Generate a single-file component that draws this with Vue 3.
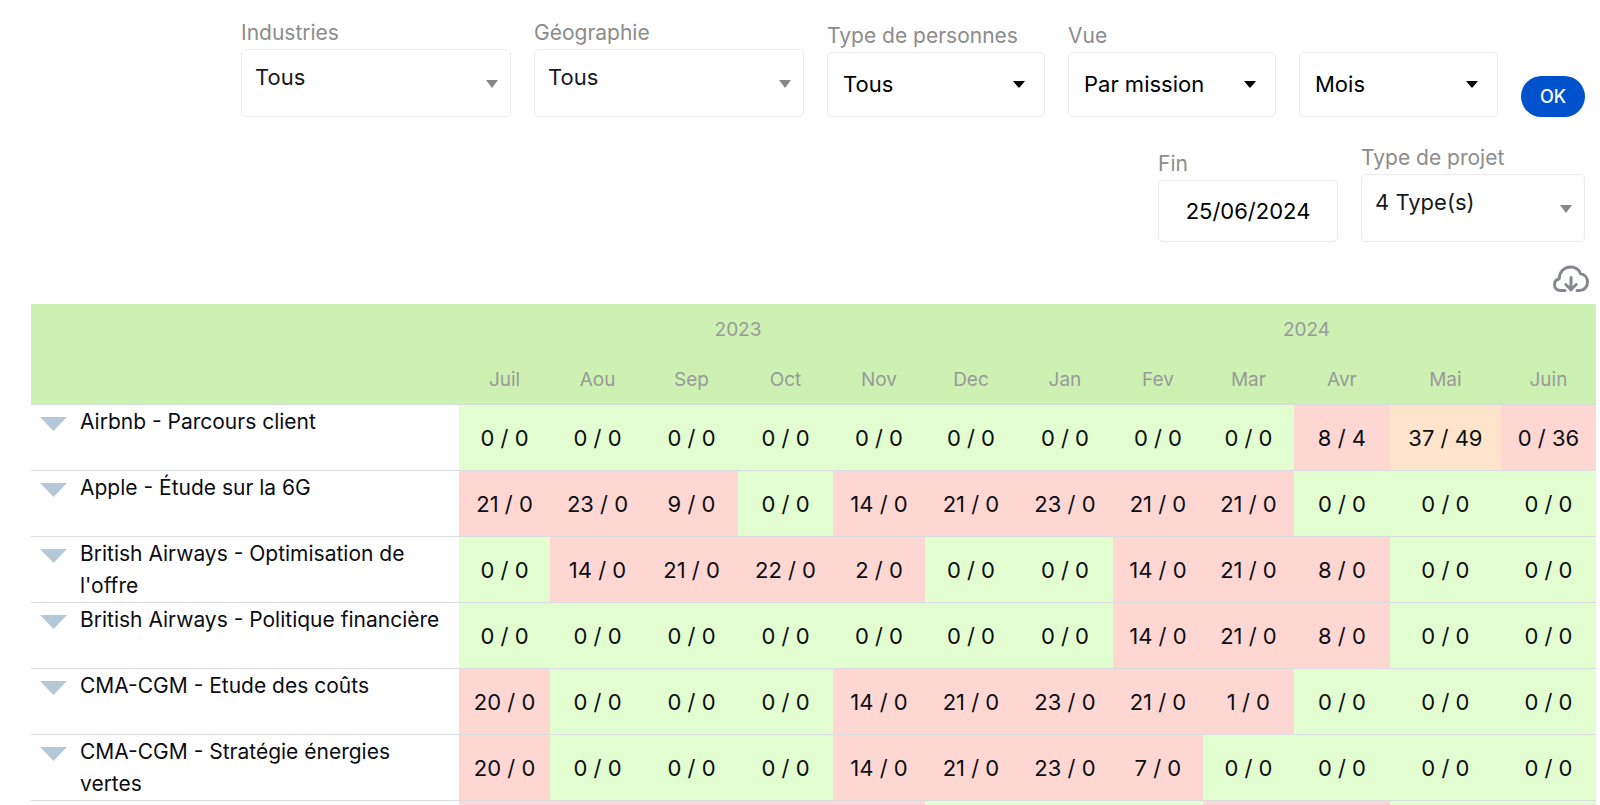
<script setup>
import { ref } from 'vue'

const industry = ref('Tous')
const geography = ref('Tous')
const people = ref('Tous')
const view = ref('Par mission')
const period = ref('Mois')
const endDate = ref('25/06/2024')
const projectType = ref('4 Type(s)')

const columnWidths = [428, 91, 95, 93, 95, 92, 92, 96, 90, 91, 96, 111, 95]
const years = [
  { label: '2023', span: 6 },
  { label: '2024', span: 6 },
]
const months = ['Juil', 'Aou', 'Sep', 'Oct', 'Nov', 'Dec', 'Jan', 'Fev', 'Mar', 'Avr', 'Mai', 'Juin']

// tones: g = balanced, r = gap, o = partial
const missions = [
  {
    name: 'Airbnb - Parcours client',
    values: ['0 / 0', '0 / 0', '0 / 0', '0 / 0', '0 / 0', '0 / 0', '0 / 0', '0 / 0', '0 / 0', '8 / 4', '37 / 49', '0 / 36'],
    tones: 'gggggggggror',
  },
  {
    name: 'Apple - Étude sur la 6G',
    values: ['21 / 0', '23 / 0', '9 / 0', '0 / 0', '14 / 0', '21 / 0', '23 / 0', '21 / 0', '21 / 0', '0 / 0', '0 / 0', '0 / 0'],
    tones: 'rrrgrrrrrggg',
  },
  {
    name: "British Airways - Optimisation de l'offre",
    values: ['0 / 0', '14 / 0', '21 / 0', '22 / 0', '2 / 0', '0 / 0', '0 / 0', '14 / 0', '21 / 0', '8 / 0', '0 / 0', '0 / 0'],
    tones: 'grrrrggrrrgg',
  },
  {
    name: 'British Airways - Politique financière',
    values: ['0 / 0', '0 / 0', '0 / 0', '0 / 0', '0 / 0', '0 / 0', '0 / 0', '14 / 0', '21 / 0', '8 / 0', '0 / 0', '0 / 0'],
    tones: 'gggggggrrrgg',
  },
  {
    name: 'CMA-CGM - Etude des coûts',
    values: ['20 / 0', '0 / 0', '0 / 0', '0 / 0', '14 / 0', '21 / 0', '23 / 0', '21 / 0', '1 / 0', '0 / 0', '0 / 0', '0 / 0'],
    tones: 'rgggrrrrrggg',
  },
  {
    name: 'CMA-CGM - Stratégie énergies vertes',
    values: ['20 / 0', '0 / 0', '0 / 0', '0 / 0', '14 / 0', '21 / 0', '23 / 0', '7 / 0', '0 / 0', '0 / 0', '0 / 0', '0 / 0'],
    tones: 'rgggrrrrgggg',
  },
]
const nextTones = 'rrrrrgggrrgg'
</script>

<template>
  <main class="page">
    <form class="filters" @submit.prevent>
      <div class="filter-row">
        <div class="field wide">
          <label for="industry">Industries</label>
          <div class="control picker">
            <select id="industry" v-model="industry"><option>Tous</option></select>
            <svg class="caret" viewBox="0 0 12 8" aria-hidden="true"><path d="M0 0H12L6 8Z" /></svg>
          </div>
        </div>
        <div class="field wide">
          <label for="geography">Géographie</label>
          <div class="control picker">
            <select id="geography" v-model="geography"><option>Tous</option></select>
            <svg class="caret" viewBox="0 0 12 8" aria-hidden="true"><path d="M0 0H12L6 8Z" /></svg>
          </div>
        </div>
        <div class="field people">
          <label for="people">Type de personnes</label>
          <div class="control menu">
            <select id="people" v-model="people"><option>Tous</option></select>
            <svg class="caret" viewBox="0 0 12 7" aria-hidden="true"><path d="M0 0H12L7 6Q6 7 5 6Z" /></svg>
          </div>
        </div>
        <div class="field view">
          <label for="view">Vue</label>
          <div class="control menu">
            <select id="view" v-model="view"><option>Par mission</option></select>
            <svg class="caret" viewBox="0 0 12 7" aria-hidden="true"><path d="M0 0H12L7 6Q6 7 5 6Z" /></svg>
          </div>
        </div>
        <div class="field period">
          <div class="control menu">
            <select v-model="period" aria-label="Période"><option>Mois</option></select>
            <svg class="caret" viewBox="0 0 12 7" aria-hidden="true"><path d="M0 0H12L7 6Q6 7 5 6Z" /></svg>
          </div>
        </div>
        <button class="submit" type="submit">OK</button>
      </div>

      <div class="filter-row">
        <div class="field date">
          <label for="end-date">Fin</label>
          <input id="end-date" v-model="endDate" type="text" />
        </div>
        <div class="field project">
          <label for="project-type">Type de projet</label>
          <div class="control picker">
            <select id="project-type" v-model="projectType"><option>4 Type(s)</option></select>
            <svg class="caret" viewBox="0 0 12 8" aria-hidden="true"><path d="M0 0H12L6 8Z" /></svg>
          </div>
        </div>
      </div>
    </form>

    <div class="tools">
      <button class="download" type="button" aria-label="Télécharger">
        <svg viewBox="0 0 36 28" aria-hidden="true">
          <path d="M12 25.500H7.500C4.200 25.500 1.500 23 1.500 19.700C1.500 16.700 3.500 14.400 6.200 13.700C6.400 7 11 2 17.500 2C22.300 2 26 4.600 27.600 8.800C31.500 9.300 34.500 12.500 34.500 17C34.500 22 31 25.500 26.500 25.500H24" />
          <path d="M18 12.500V25M12.800 19.500L18 24.700L23.200 19.500" />
        </svg>
      </button>
    </div>

    <table>
      <colgroup>
        <col v-for="(w, i) in columnWidths" :key="i" :style="{ width: w / 15.65 + '%' }" />
      </colgroup>
      <thead>
        <tr>
          <td rowspan="2"></td>
          <th v-for="y in years" :key="y.label" :colspan="y.span" scope="colgroup">{{ y.label }}</th>
        </tr>
        <tr>
          <th v-for="m in months" :key="m" scope="col">{{ m }}</th>
        </tr>
      </thead>
      <tbody>
        <tr v-for="mission in missions" :key="mission.name">
          <th scope="row">
            <div class="mission">
              <button class="toggle" type="button" :aria-label="'Déplier ' + mission.name">
                <svg viewBox="0 0 27 14" aria-hidden="true"><path d="M0 0H27L13.500 14Z" /></svg>
              </button>
              <span>{{ mission.name }}</span>
            </div>
          </th>
          <td v-for="(v, i) in mission.values" :key="i" :class="mission.tones[i]">{{ v }}</td>
        </tr>
        <tr>
          <th scope="row"></th>
          <td v-for="(m, i) in months" :key="m" :class="nextTones[i]"></td>
        </tr>
      </tbody>
    </table>
  </main>
</template>

<style>
body {
  background: #fff;
}
</style>

<style scoped>
* {
  box-sizing: border-box;
}
.page {
  height: 100vh;
  overflow: hidden;
  padding: 21px 4px 0 31px;
  font-family: Inter, "Liberation Sans", sans-serif;
  color: #0b0d12;
}
.filters {
  display: flex;
  flex-direction: column;
  gap: 29px;
  padding-right: 11px;
}
.filter-row {
  display: flex;
  justify-content: flex-end;
  align-items: flex-end;
  gap: 23px;
}
.field {
  display: flex;
  flex-direction: column;
  gap: 4px;
}
.field label {
  font-size: 21px;
  line-height: 24px;
  color: #8c8c8c;
}
.wide { width: 270px; }
.people { width: 218px; }
.view { width: 208px; }
.period { width: 199px; }
.date { width: 180px; }
.project { width: 224px; }
.control {
  position: relative;
}
select,
input {
  display: block;
  width: 100%;
  margin: 0;
  border: 1px solid #ececec;
  border-radius: 5px;
  background: #fff;
  font: inherit;
  font-size: 22px;
  color: #000;
  appearance: none;
}
.picker select {
  height: 68px;
  padding: 0 32px 13px 13px;
  color: #17191e;
}
.menu select {
  height: 65px;
  padding: 0 40px 2px 15px;
}
input {
  height: 62px;
  padding: 0 8px;
  text-align: center;
}
.caret {
  position: absolute;
  pointer-events: none;
  width: 12px;
}
.picker .caret {
  right: 13px;
  top: 31px;
  height: 8px;
  fill: #878787;
}
.menu .caret {
  right: 20px;
  top: 29px;
  height: 7px;
  fill: #000;
}
.submit {
  width: 64px;
  height: 41px;
  padding: 0;
  border: 0;
  border-radius: 21px;
  background: #0052cc;
  color: #fff;
  font: inherit;
  font-size: 18px;
  font-weight: 500;
}
.tools {
  display: flex;
  justify-content: flex-end;
  padding: 23px 7px 11px 0;
}
.download {
  width: 36px;
  height: 28px;
  padding: 0;
  border: 0;
  background: none;
}
.download svg {
  display: block;
  fill: none;
  stroke: #85878f;
  stroke-width: 3;
  stroke-linecap: round;
  stroke-linejoin: round;
}
table {
  width: 100%;
  table-layout: fixed;
  border-collapse: separate;
  border-spacing: 0;
}
thead {
  background: #cdf1b3;
}
th,
td {
  padding: 0;
  font-weight: 400;
  text-align: center;
  vertical-align: middle;
}
thead th {
  height: 50px;
  font-size: 19px;
  color: #999;
}
thead tr:last-child th,
thead td {
  border-bottom: 1px solid #d6dcd8;
}
thead tr:last-child th {
  height: 51px;
}
tbody th,
tbody td {
  height: 66px;
  border-bottom: 1px solid #dadce0;
  font-size: 22px;
}
tbody th {
  vertical-align: top;
}
.mission {
  display: flex;
  align-items: flex-start;
  gap: 13px;
  padding: 1px 8px 0 9px;
  text-align: left;
  font-size: 21px;
  line-height: 32px;
}
.toggle {
  flex: none;
  width: 27px;
  height: 14px;
  margin-top: 11px;
  padding: 0;
  border: 0;
  background: none;
}
.toggle svg {
  display: block;
  fill: #b5c8d7;
}
.g { background: #e2fdcf; }
.r { background: #fed7d2; }
.o { background: #fee4ca; }
</style>
